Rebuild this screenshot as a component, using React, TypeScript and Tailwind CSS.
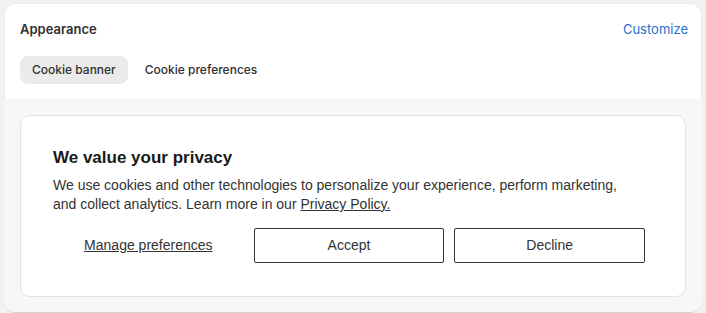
const bannerFont = { fontFamily: '"Liberation Sans", Arial, sans-serif' };

function Tabs() {
  return (
    <div className="flex items-center gap-[5px]">
      <button
        type="button"
        className="h-7 rounded-lg bg-[#ebebeb] px-3 text-[12px] font-medium text-[#303030]"
      >
        Cookie banner
      </button>
      <button
        type="button"
        className="h-7 rounded-lg px-3 text-[12px] font-medium text-[#303030]"
      >
        Cookie preferences
      </button>
    </div>
  );
}

function CookieBanner() {
  return (
    <div
      className="rounded-[10px] border border-[#e3e3e3] bg-white pl-[32px] pr-[42px] pt-[32px] pb-[33px]"
      style={bannerFont}
    >
      <h2 className="text-[17px] font-bold leading-5 text-[#1a1a1a]">
        We value your privacy
      </h2>
      <p className="mt-[8px] w-[575px] text-[14px] leading-[19px] text-[#333333]">
        We use cookies and other technologies to personalize your experience,
        perform marketing, and collect analytics. Learn more in our{" "}
        <a href="#" className="underline">
          Privacy Policy.
        </a>
      </p>
      <div className="mt-[14px] grid w-[592px] grid-cols-3 gap-[10px]">
        <button
          type="button"
          className="h-[35px] text-[14px] text-[#333333] underline"
        >
          Manage preferences
        </button>
        <button
          type="button"
          className="h-[35px] rounded-[2px] border border-[#333333] text-[14px] text-[#333333]"
        >
          Accept
        </button>
        <button
          type="button"
          className="h-[35px] rounded-[2px] border border-[#333333] text-[14px] text-[#333333]"
        >
          Decline
        </button>
      </div>
    </div>
  );
}

export default function App() {
  return (
    <div
      className="h-[313px] w-[706px] bg-[#f1f1f1] pl-1 pr-1 pt-[3px]"
      style={{ fontFamily: 'Inter, "Noto Sans", sans-serif' }}
    >
      <div className="overflow-hidden rounded-xl bg-white shadow-[0_1px_0_0_#d4d4d4,inset_0_0_0_1px_#ebebeb]">
        <div className="pl-4 pr-[14px] pt-[16px] pb-[15px]">
          <div className="flex items-center justify-between">
            <h3 className="text-[13px] font-semibold leading-5 text-[#303030]">
              Appearance
            </h3>
            <a href="#" className="text-[13px] leading-5 text-[#2c6ecb]">
              Customize
            </a>
          </div>
          <div className="mt-[17px]">
            <Tabs />
          </div>
        </div>
        <div className="bg-[#f7f7f7] px-4 pt-4 pb-[15px]">
          <CookieBanner />
        </div>
      </div>
    </div>
  );
}
